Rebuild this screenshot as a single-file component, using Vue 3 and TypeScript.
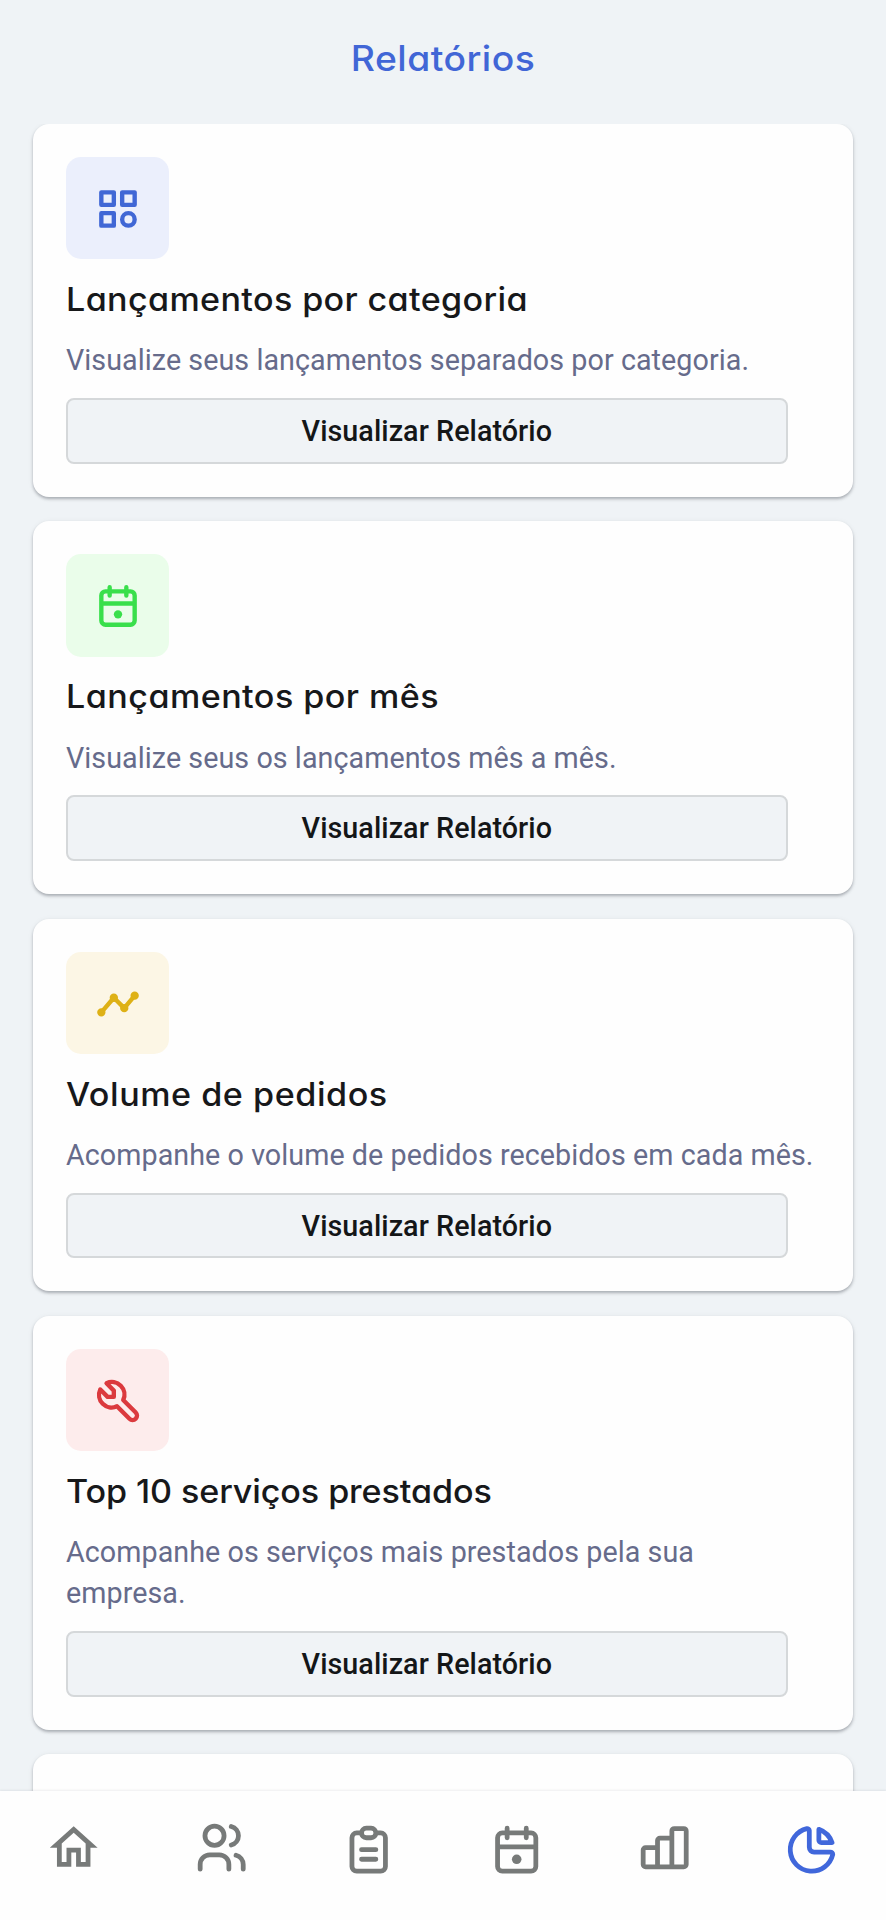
<script setup lang="ts">
interface Shape {
  d: string
  fill?: boolean
}

interface Report {
  tone: string
  title: string
  text: string
  icon: Shape[]
}

interface NavItem {
  label: string
  icon: Shape[]
  active?: boolean
  raised?: boolean
}

const calendar: Shape[] = [
  { d: 'M6 5h12a2 2 0 0 1 2 2v12a2 2 0 0 1-2 2H6a2 2 0 0 1-2-2V7a2 2 0 0 1 2-2zM8 3v4M16 3v4M4 10.8h16' },
  { d: 'M14 16a2 2 0 1 1-4 0a2 2 0 1 1 4 0z', fill: true },
]

const reports: Report[] = [
  {
    tone: 'blue',
    title: 'Lançamentos por categoria',
    text: 'Visualize seus lançamentos separados por categoria.',
    icon: [{ d: 'M4 4h6v6H4zM14 4h6v6h-6zM4 14h6v6H4zM20 17a3 3 0 1 1-6 0a3 3 0 1 1 6 0z' }],
  },
  {
    tone: 'green',
    title: 'Lançamentos por mês',
    text: 'Visualize seus os lançamentos mês a mês.',
    icon: calendar,
  },
  {
    tone: 'yellow',
    title: 'Volume de pedidos',
    text: 'Acompanhe o volume de pedidos recebidos em cada mês.',
    icon: [
      { d: 'M4 16l6-7l5 5l5-6' },
      { d: 'M6 16a2 2 0 1 1-4 0a2 2 0 1 1 4 0zM12 9a2 2 0 1 1-4 0a2 2 0 1 1 4 0zM17 14a2 2 0 1 1-4 0a2 2 0 1 1 4 0zM22 8a2 2 0 1 1-4 0a2 2 0 1 1 4 0z', fill: true },
    ],
  },
  {
    tone: 'red',
    title: 'Top 10 serviços prestados',
    text: 'Acompanhe os serviços mais prestados pela sua empresa.',
    icon: [{ d: 'M7 10h3V7L6.5 3.5a6 6 0 0 1 8 8l6 6a2 2 0 0 1-3 3l-6-6a6 6 0 0 1-8-8z' }],
  },
]

const nav: NavItem[] = [
  {
    label: 'Início',
    raised: true,
    icon: [{ d: 'M12 5.7l5 4.5V18h-2v-6H9v6H7v-7.8zM12 3L2 12h3v8h6v-6h2v6h6v-8h3z', fill: true }],
  },
  {
    label: 'Clientes',
    raised: true,
    icon: [{ d: 'M13 7a4 4 0 1 1-8 0a4 4 0 1 1 8 0zM3 21v-2a4 4 0 0 1 4-4h4a4 4 0 0 1 4 4v2M16 3.13a4 4 0 0 1 0 7.75M21 21v-2a4 4 0 0 0-3-3.85' }],
  },
  {
    label: 'Pedidos',
    icon: [{ d: 'M9 5H7a2 2 0 0 0-2 2v12a2 2 0 0 0 2 2h10a2 2 0 0 0 2-2V7a2 2 0 0 0-2-2h-2M11 3h2a2 2 0 0 1 0 4h-2a2 2 0 0 1 0-4zM9 12h6M9 16h6' }],
  },
  { label: 'Agenda', icon: calendar },
  {
    label: 'Financeiro',
    raised: true,
    icon: [{ d: 'M4 12h5v8H4a1 1 0 0 1-1-1v-6a1 1 0 0 1 1-1zM15 8h-5a1 1 0 0 0-1 1v11h6zM16 4h4a1 1 0 0 1 1 1v14a1 1 0 0 1-1 1h-5V5a1 1 0 0 1 1-1z' }],
  },
  {
    label: 'Relatórios',
    active: true,
    icon: [{ d: 'M10 3.2A9 9 0 1 0 20.8 14a1 1 0 0 0-1-1H13a2 2 0 0 1-2-2V4a.9.9 0 0 0-1-.8M15 3.5A9 9 0 0 1 20.5 9H16a1 1 0 0 1-1-1z' }],
  },
]
</script>

<template>
  <div class="screen">
    <header class="header"><h1>Relatórios</h1></header>

    <main class="reports">
      <article v-for="report in reports" :key="report.title" class="card">
        <div class="tile" :class="report.tone">
          <svg class="icon" viewBox="0 0 24 24" aria-hidden="true">
            <path v-for="shape in report.icon" :key="shape.d" :d="shape.d" :class="{ solid: shape.fill }" />
          </svg>
        </div>
        <h2 :class="report.tone">{{ report.title }}</h2>
        <p>{{ report.text }}</p>
        <button type="button">Visualizar Relatório</button>
      </article>
      <article class="card next"></article>
    </main>

    <nav class="nav">
      <a v-for="item in nav" :key="item.label" :aria-label="item.label" :class="{ active: item.active, raised: item.raised }">
        <svg class="icon" viewBox="0 0 24 24" aria-hidden="true">
          <path v-for="shape in item.icon" :key="shape.d" :d="shape.d" :class="{ solid: shape.fill }" />
        </svg>
      </a>
    </nav>
  </div>
</template>

<style>
body {
  margin: 0;
  background: #eff3f6;
}
</style>

<style scoped>
.screen {
  display: flex;
  flex-direction: column;
  height: 1920px;
  overflow: hidden;
  background: #eff3f6;
  font-family: Roboto, "Liberation Sans", sans-serif;
}

h1,
h2,
p {
  margin: 0;
}

.header {
  flex: none;
  box-sizing: border-box;
  height: 124px;
  padding-top: 32px;
  text-align: center;
}

h1,
h2 {
  font-family: Inter, "Open Sans", sans-serif;
  font-weight: 500;
  font-feature-settings: "cv11";
  white-space: nowrap;
}

h1 {
  color: #4166d6;
  font-size: 35px;
  line-height: 53px;
  letter-spacing: 0.45px;
  transform: scaleX(1.065);
}

.reports {
  flex: 1;
  min-height: 0;
  display: flex;
  flex-direction: column;
  gap: 24.6px;
  padding: 0 33px;
  overflow: hidden;
}

.card {
  flex: none;
  padding: 32.8px 33px 33px;
  border-radius: 16px;
  background: #fefefe;
  box-shadow: 0 2px 3px rgba(30, 35, 45, 0.3), 0 1px 6px rgba(30, 35, 45, 0.06);
}

.card.next {
  height: 200px;
}

.tile {
  display: flex;
  align-items: center;
  justify-content: center;
  box-sizing: border-box;
  width: 103px;
  height: 102.6px;
  padding-top: 2px;
  border-radius: 15px;
}

.tile.blue { background: #ebeffc; color: #4067d5; }
.tile.green { background: #eafdea; color: #39df4b; }
.tile.yellow { background: #fcf6e5; color: #deb116; }
.tile.red { background: #fdecec; color: #db3a3e; }

.icon {
  display: block;
  width: 50px;
  height: 50px;
  fill: none;
  stroke: currentColor;
  stroke-width: 2;
  stroke-linecap: round;
  stroke-linejoin: round;
}

.tile .icon {
  stroke-width: 2.1;
}

.icon .solid {
  fill: currentColor;
  stroke: none;
}

h2 {
  margin-top: 16.4px;
  color: #17181a;
  font-size: 32px;
  line-height: 48.2px;
  transform: scaleX(1.065);
  transform-origin: left;
}

h2.blue { letter-spacing: 0.35px; }
h2.green { letter-spacing: 0.44px; }
h2.yellow { letter-spacing: 0.52px; }
h2.red { letter-spacing: -0.08px; }

p {
  max-width: 750px;
  margin-top: 16.4px;
  color: #666b8b;
  font-size: 28.7px;
  line-height: 41px;
  letter-spacing: 0.06px;
}

button {
  display: block;
  box-sizing: border-box;
  width: 721.6px;
  height: 65.8px;
  margin: 16.6px 0 0;
  padding: 0;
  border: 2px solid #d5d8da;
  border-radius: 8px;
  background: #f0f3f6;
  color: #141618;
  font: 500 28.7px Roboto, "Liberation Sans", sans-serif;
  letter-spacing: 0.06px;
}

.nav {
  flex: none;
  z-index: 1;
  display: grid;
  grid-template-columns: repeat(6, 1fr);
  justify-items: center;
  box-sizing: border-box;
  height: 129.5px;
  padding-top: 30px;
  background: #fefefe;
  box-shadow: 0 -1px 2px rgba(30, 35, 45, 0.07);
  color: #777a79;
}

.nav .icon {
  width: 57.4px;
  height: 57.4px;
}

.nav .active {
  color: #4067db;
}

.nav .raised {
  margin-top: -1.6px;
}
</style>
